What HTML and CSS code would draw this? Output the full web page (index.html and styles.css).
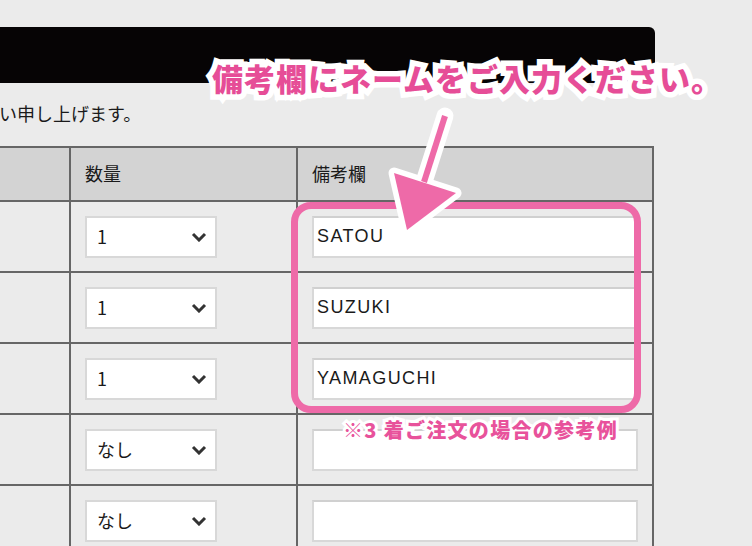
FILE: index.html
```html
<!DOCTYPE html>
<html lang="ja">
<head>
    <meta charset="UTF-8">
    <title>ご注文フォーム</title>
    <link rel="stylesheet" href="styles.css">
</head>
<body>
<div class="page">
    <div class="head-bar"></div>
    <p class="lead">ご了承のほど、よろしくお願い申し上げます。</p>

    <table class="order">
        <colgroup>
            <col class="c-name">
            <col class="c-qty">
            <col class="c-note">
        </colgroup>
        <thead>
            <tr>
                <th></th>
                <th>数量</th>
                <th>備考欄</th>
            </tr>
        </thead>
        <tbody>
            <tr>
                <td></td>
                <td><div class="sel"><select><option>1</option></select><svg class="chev" width="16" height="10" viewBox="0 0 16 10"><polyline points="2,2 8,8 14,2"/></svg></div></td>
                <td><input class="note" type="text" value="SATOU"></td>
            </tr>
            <tr>
                <td></td>
                <td><div class="sel"><select><option>1</option></select><svg class="chev" width="16" height="10" viewBox="0 0 16 10"><polyline points="2,2 8,8 14,2"/></svg></div></td>
                <td><input class="note" type="text" value="SUZUKI"></td>
            </tr>
            <tr>
                <td></td>
                <td><div class="sel"><select><option>1</option></select><svg class="chev" width="16" height="10" viewBox="0 0 16 10"><polyline points="2,2 8,8 14,2"/></svg></div></td>
                <td><input class="note" type="text" value="YAMAGUCHI"></td>
            </tr>
            <tr>
                <td></td>
                <td><div class="sel"><select><option>なし</option></select><svg class="chev" width="16" height="10" viewBox="0 0 16 10"><polyline points="2,2 8,8 14,2"/></svg></div></td>
                <td><input class="note" type="text" value=""></td>
            </tr>
            <tr>
                <td></td>
                <td><div class="sel"><select><option>なし</option></select><svg class="chev" width="16" height="10" viewBox="0 0 16 10"><polyline points="2,2 8,8 14,2"/></svg></div></td>
                <td><input class="note" type="text" value=""></td>
            </tr>
        </tbody>
    </table>

    <!-- 注釈 -->
    <div class="mark-box"></div>
    <p class="mark-note">※3 着ご注文の場合の参考例</p>
    <svg class="mark-arrow" width="90" height="140" viewBox="380 100 90 140">
        <g stroke="#fff" stroke-linejoin="round" stroke-linecap="round" fill="#fff">
            <line x1="445" y1="116" x2="424" y2="182" stroke-width="17"/>
            <polygon points="394,173 456,193 407,230" stroke-width="11"/>
        </g>
        <g fill="#ee6aa8">
            <line x1="445" y1="116" x2="424" y2="182" stroke="#ee6aa8" stroke-width="6"/>
            <polygon points="394,173 456,193 407,230"/>
        </g>
    </svg>
    <p class="mark-title">備考欄にネームをご入力ください。</p>
</div>
</body>
</html>
```

FILE: styles.css
```css
@charset "UTF-8";
/* reset */
body,p,table,th,td,ul,li{margin:0;padding:0}
body{
    font:18px/1.4 "Liberation Sans", "Noto Sans CJK JP", sans-serif;
    color:#1a1a1a;
    background:#ebebeb;
    overflow:hidden;
}
select,input{font:inherit;color:inherit;outline:none}

.page{
    width:915px;
    margin-left:-260px;
    padding-top:27px;
    position:relative;
}
.head-bar{
    height:56px;
    background:#060405;
    border-top-right-radius:6px;
}
.lead{
    line-height:26px;
    margin:17px 0 20px;
    padding-left:26px;
    white-space:nowrap;
    font-family:"Noto Sans CJK JP", sans-serif;
    font-size:18px;
}

/* table */
.order{
    width:913px;
    border-collapse:collapse;
    table-layout:fixed;
}
.c-name{width:330px}
.c-qty{width:227px}
.c-note{width:356px}
.order th,.order td{
    border:2px solid #666;
    text-align:left;
    vertical-align:middle;
}
.order th{
    height:52px;
    background:#d3d3d3;
    font-weight:normal;
    padding-left:14px;
    font-family:"Noto Sans CJK JP", sans-serif;
}
.order td{
    height:69px;
    padding-left:14px;
}
.order td:first-child{border-left:0}
.order th:first-child{border-left:0}

.sel{
    position:relative;
    width:132px;
    height:42px;
}
.sel select{
    appearance:none;
    -webkit-appearance:none;
    width:100%;
    height:100%;
    border:2px solid #d8d8d8;
    background:#fff;
    padding:0 0 0 10px;
    font-family:"Noto Sans CJK JP", sans-serif;
    font-size:18px;
    border-radius:0;
}
.chev{
    position:absolute;
    right:10px;
    top:16px;
    fill:none;
    stroke:#333;
    stroke-width:3;
}
.note{
    width:326px;
    height:42px;
    box-sizing:border-box;
    border:2px solid #d8d8d8;
    border-top-color:#d0d0d0;
    background:#fff;
    padding:0 0 0 3px;
    font-family:"Liberation Sans", sans-serif;
    letter-spacing:1.4px;
}

/* annotations */
.mark-box{
    position:absolute;
    left:551px;
    top:202px;
    width:336px;
    height:197px;
    border:7px solid #ee6aa8;
    border-radius:20px;
}
.mark-note{
    position:absolute;
    left:603px;
    top:416px;
    font-family:"Noto Sans CJK JP", sans-serif;
    font-weight:900;
    font-size:20px;
    line-height:28px;
    letter-spacing:1.3px;
    color:#e8529b;
    -webkit-text-stroke:6px #fff;
    paint-order:stroke fill;
    white-space:nowrap;
}
.mark-arrow{
    position:absolute;
    left:640px;
    top:100px;
}
.mark-title{
    position:absolute;
    left:472px;
    top:56px;
    font-family:"Noto Sans CJK JP", sans-serif;
    font-weight:900;
    font-size:31px;
    line-height:44px;
    letter-spacing:1px;
    color:#e64d97;
    -webkit-text-stroke:11px #fff;
    paint-order:stroke fill;
    white-space:nowrap;
}
```
